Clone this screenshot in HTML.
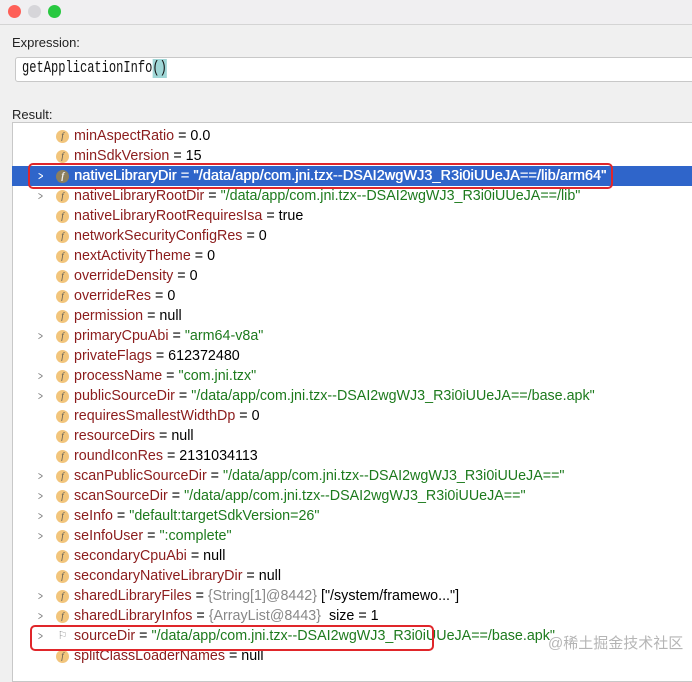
<!DOCTYPE html>
<html><head><meta charset="utf-8"><style>
*{margin:0;padding:0;box-sizing:border-box}
body{width:692px;height:670px;overflow:hidden;background:#f0f0f0;font-family:"Liberation Sans","Noto Sans CJK SC",sans-serif;position:relative}
.tb{position:absolute;left:0;top:0;width:692px;height:25px;background:#f0eff1;border-bottom:1px solid #d4d4d4}
.dot{position:absolute;top:5px;width:13px;height:13px;border-radius:50%}
.lbl{position:absolute;left:12px;font-size:13px;color:#222}
.inp{position:absolute;left:15px;top:57px;width:680px;height:25px;background:#fff;border:1px solid #c8c8c8;border-radius:3px}
.it{position:absolute;left:6px;top:1px;font-family:"Liberation Mono",monospace;font-size:17px;color:#111;transform:scaleX(.71);transform-origin:left;white-space:nowrap}
.it span{background:#9fd6d6}
.panel{position:absolute;left:12px;top:122px;width:690px;height:560px;background:#fff;border:1px solid #c8c8c8}
.row{position:absolute;left:12px;width:680px;height:20px;font-size:14.3px;line-height:20px;white-space:nowrap;color:#000}
.row.sel{background:#2f65ca;color:#fff;text-shadow:0.5px 0 #fff;letter-spacing:0.15px}
.row.sel .n,.row.sel .s{color:#fff}
.ar{position:absolute;left:25px;top:0;color:#777;font-size:12px;transform:scaleX(.7)}
.sel .ar{color:#fff}
.ic{position:absolute;left:44px;top:4px;width:13px;height:13px;border-radius:50%;background:#f2c57c;color:#555;font-size:9px;line-height:13px;text-align:center;font-family:"Liberation Serif",serif;font-style:italic}
.sel .ic{background:#8c7f5e;color:#eee}
.t{position:absolute;left:62px}
.n{color:#8b1c1c}
.s{color:#1d7a1d}
.g{color:#888}
.box{position:absolute;border:2px solid #e0262a;border-radius:5px}
</style></head><body>
<div class="tb"><div class="dot" style="left:8px;background:#fe5f57"></div><div class="dot" style="left:28px;background:#d6d5d9"></div><div class="dot" style="left:48px;background:#28c840"></div></div>
<div class="lbl" style="top:35px">Expression:</div>
<div class="inp"><div class="it">getApplicationInfo<span>()</span></div></div>
<div class="lbl" style="top:107px">Result:</div>
<div class="panel"></div>

<div class="row" style="top:126px"><div class="ic">f</div><div class="t"><span class="n">minAspectRatio</span> = 0.0</div></div>
<div class="row" style="top:146px"><div class="ic">f</div><div class="t"><span class="n">minSdkVersion</span> = 15</div></div>
<div class="row sel" style="top:166px"><div class="ar">&gt;</div><div class="ic">f</div><div class="t"><span class="n">nativeLibraryDir</span> = <span class="s">"/data/app/com.jni.tzx--DSAI2wgWJ3_R3i0iUUeJA==/lib/arm64"</span></div></div>
<div class="row" style="top:186px"><div class="ar">&gt;</div><div class="ic">f</div><div class="t"><span class="n">nativeLibraryRootDir</span> = <span class="s">"/data/app/com.jni.tzx--DSAI2wgWJ3_R3i0iUUeJA==/lib"</span></div></div>
<div class="row" style="top:206px"><div class="ic">f</div><div class="t"><span class="n">nativeLibraryRootRequiresIsa</span> = true</div></div>
<div class="row" style="top:226px"><div class="ic">f</div><div class="t"><span class="n">networkSecurityConfigRes</span> = 0</div></div>
<div class="row" style="top:246px"><div class="ic">f</div><div class="t"><span class="n">nextActivityTheme</span> = 0</div></div>
<div class="row" style="top:266px"><div class="ic">f</div><div class="t"><span class="n">overrideDensity</span> = 0</div></div>
<div class="row" style="top:286px"><div class="ic">f</div><div class="t"><span class="n">overrideRes</span> = 0</div></div>
<div class="row" style="top:306px"><div class="ic">f</div><div class="t"><span class="n">permission</span> = null</div></div>
<div class="row" style="top:326px"><div class="ar">&gt;</div><div class="ic">f</div><div class="t"><span class="n">primaryCpuAbi</span> = <span class="s">"arm64-v8a"</span></div></div>
<div class="row" style="top:346px"><div class="ic">f</div><div class="t"><span class="n">privateFlags</span> = 612372480</div></div>
<div class="row" style="top:366px"><div class="ar">&gt;</div><div class="ic">f</div><div class="t"><span class="n">processName</span> = <span class="s">"com.jni.tzx"</span></div></div>
<div class="row" style="top:386px"><div class="ar">&gt;</div><div class="ic">f</div><div class="t"><span class="n">publicSourceDir</span> = <span class="s">"/data/app/com.jni.tzx--DSAI2wgWJ3_R3i0iUUeJA==/base.apk"</span></div></div>
<div class="row" style="top:406px"><div class="ic">f</div><div class="t"><span class="n">requiresSmallestWidthDp</span> = 0</div></div>
<div class="row" style="top:426px"><div class="ic">f</div><div class="t"><span class="n">resourceDirs</span> = null</div></div>
<div class="row" style="top:446px"><div class="ic">f</div><div class="t"><span class="n">roundIconRes</span> = 2131034113</div></div>
<div class="row" style="top:466px"><div class="ar">&gt;</div><div class="ic">f</div><div class="t"><span class="n">scanPublicSourceDir</span> = <span class="s">"/data/app/com.jni.tzx--DSAI2wgWJ3_R3i0iUUeJA=="</span></div></div>
<div class="row" style="top:486px"><div class="ar">&gt;</div><div class="ic">f</div><div class="t"><span class="n">scanSourceDir</span> = <span class="s">"/data/app/com.jni.tzx--DSAI2wgWJ3_R3i0iUUeJA=="</span></div></div>
<div class="row" style="top:506px"><div class="ar">&gt;</div><div class="ic">f</div><div class="t"><span class="n">seInfo</span> = <span class="s">"default:targetSdkVersion=26"</span></div></div>
<div class="row" style="top:526px"><div class="ar">&gt;</div><div class="ic">f</div><div class="t"><span class="n">seInfoUser</span> = <span class="s">":complete"</span></div></div>
<div class="row" style="top:546px"><div class="ic">f</div><div class="t"><span class="n">secondaryCpuAbi</span> = null</div></div>
<div class="row" style="top:566px"><div class="ic">f</div><div class="t"><span class="n">secondaryNativeLibraryDir</span> = null</div></div>
<div class="row" style="top:586px"><div class="ar">&gt;</div><div class="ic">f</div><div class="t"><span class="n">sharedLibraryFiles</span> = <span class="g">{String[1]@8442}</span> ["/system/framewo..."]</div></div>
<div class="row" style="top:606px"><div class="ar">&gt;</div><div class="ic">f</div><div class="t"><span class="n">sharedLibraryInfos</span> = <span class="g">{ArrayList@8443}</span>&nbsp; size = 1</div></div>
<div class="row" style="top:626px"><div class="ar">&gt;</div><div class="ic" style="background:none;color:#999;font-style:normal;font-size:11px">⚐</div><div class="t"><span class="n">sourceDir</span> = <span class="s">"/data/app/com.jni.tzx--DSAI2wgWJ3_R3i0iUUeJA==/base.apk"</span></div></div>
<div class="row" style="top:646px"><div class="ic">f</div><div class="t"><span class="n">splitClassLoaderNames</span> = null</div></div>

<div class="box" style="left:28px;top:163px;width:585px;height:26px"></div>
<div class="box" style="left:30px;top:625px;width:404px;height:26px"></div>
<div style="position:absolute;left:548px;top:632px;font-size:15px;color:rgba(150,150,150,.7)">@稀土掘金技术社区</div>
</body></html>
